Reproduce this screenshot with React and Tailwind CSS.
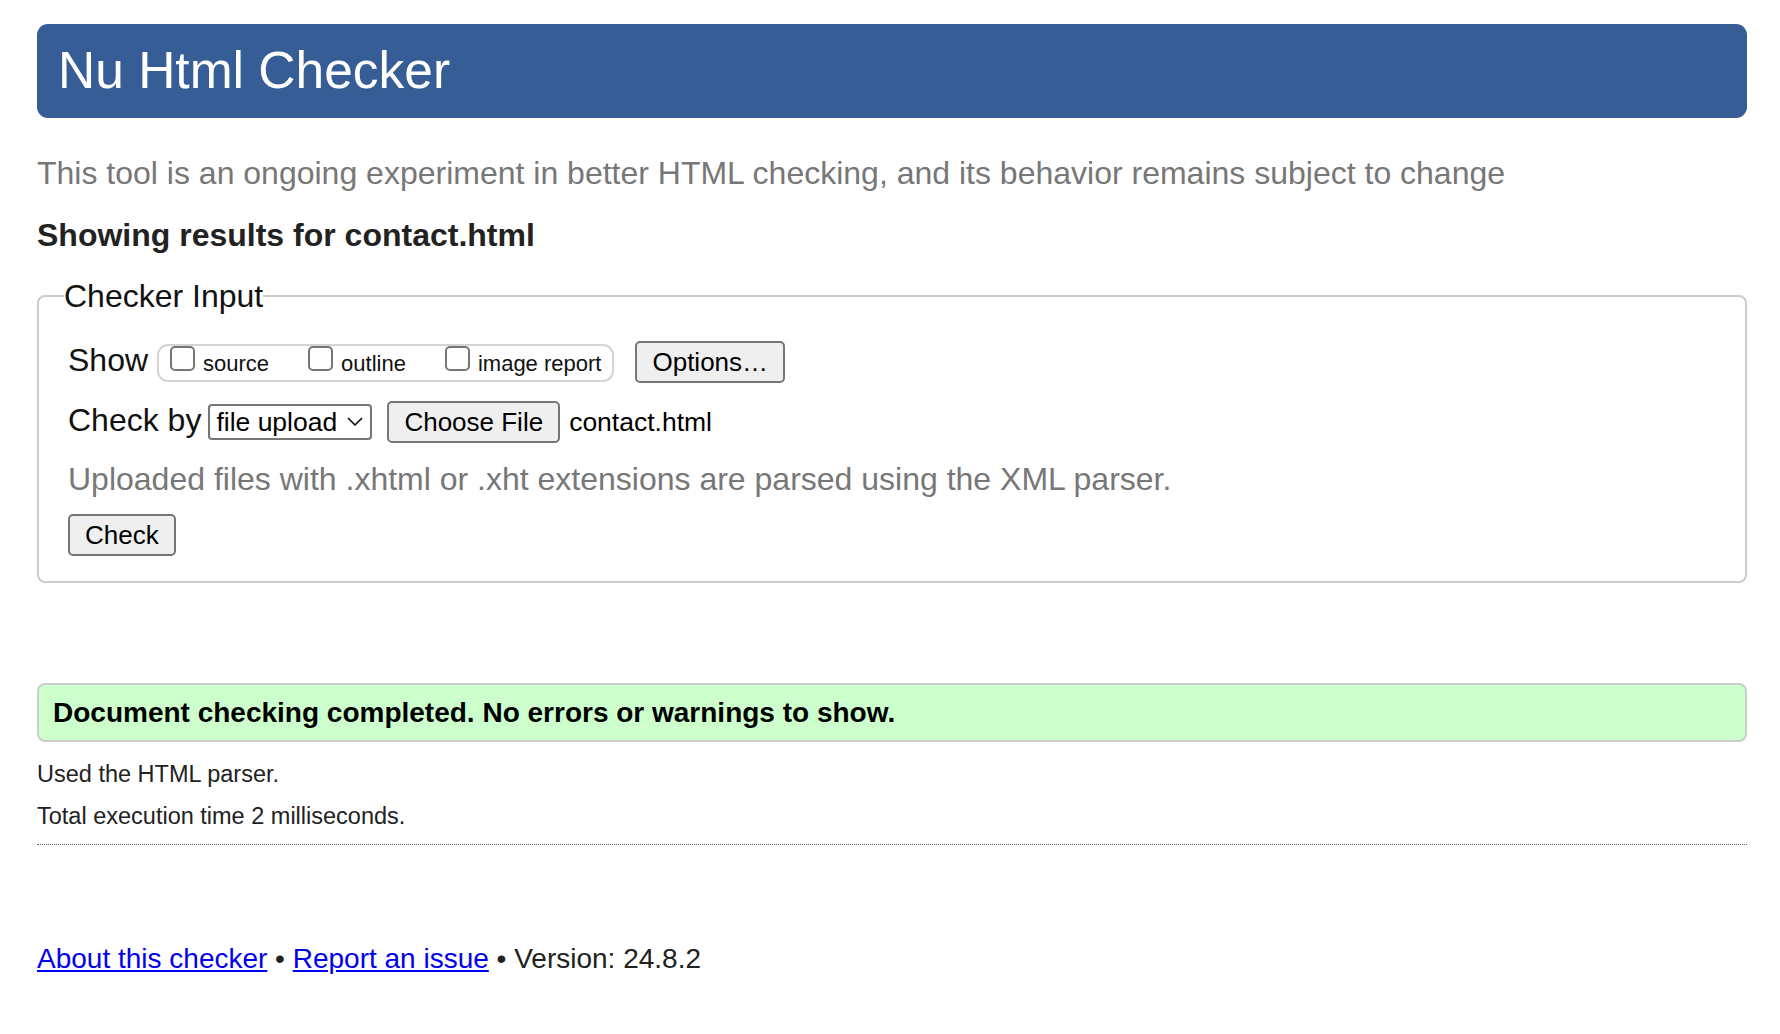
import React from "react";

const Chevron = () => (
  <svg width="16" height="10" viewBox="0 0 16 10" fill="none" stroke="#111" strokeWidth="1.7" strokeLinecap="round" strokeLinejoin="round">
    <path d="M1.5 1.5 L8 8 L14.5 1.5" />
  </svg>
);

const Option = ({ label }) => (
  <label className="flex items-baseline gap-[8px]">
    <input
      type="checkbox"
      className="appearance-none w-[25px] h-[25px] border-2 border-[#767676] rounded-[5px] bg-white"
    />
    <span className="text-[22px] leading-[26px] text-[#111]">{label}</span>
  </label>
);

const Btn = ({ children, className = "" }) => (
  <button
    type="button"
    className={`border-2 border-[#767676] rounded-[5px] bg-[#efefef] px-[15px] text-[26px] leading-none text-black ${className}`}
  >
    {children}
  </button>
);

export default function App() {
  return (
    <div className="min-h-screen bg-white pl-[37px] pr-[33px] pt-[24px] pb-[60px] font-['Liberation_Sans',Arial,sans-serif] text-[#222]">
      {/* header */}
      <header className="h-[94px] rounded-[11px] bg-[#365d96] flex items-center pl-[21px]">
        <h1 className="text-[51.5px] leading-none text-white">Nu Html Checker</h1>
      </header>

      <p className="mt-[35px] text-[32px] leading-[40px] text-[#777]">
        This tool is an ongoing experiment in better HTML checking, and its behavior remains subject to change
      </p>

      <h2 className="mt-[22px] text-[32px] leading-[40px] font-bold text-[#222]">
        Showing results for contact.html
      </h2>

      {/* checker input */}
      <fieldset className="mt-[24px] border-2 border-[#ccc] rounded-[8px] pl-[29px] pt-[28px] pb-[25px]">
        <legend className="-ml-[4px] text-[32px] leading-[34px] text-[#111]">Checker Input</legend>

        <div className="flex items-baseline">
          <span className="text-[32px] leading-[36px] text-[#111] mr-[9px]">Show</span>
          <div className="flex items-baseline gap-[39px] h-[38px] border-2 border-[#d4d4d4] rounded-[11px] pl-[11px] pr-[11px]">
            <Option label="source" />
            <Option label="outline" />
            <Option label="image report" />
          </div>
          <Btn className="ml-[21px] h-[42px]">Options…</Btn>
        </div>

        <div className="flex items-baseline mt-[18px]">
          <span className="text-[32px] leading-[36px] text-[#111] mr-[7px]">Check by</span>
          <div className="flex items-center justify-between h-[36px] w-[164px] border-2 border-[#767676] rounded-[4px] pl-[6px] pr-[7px]">
            <span className="text-[26.5px] leading-none text-black">file upload</span>
            <Chevron />
          </div>
          <Btn className="ml-[15px] h-[42px]">Choose File</Btn>
          <span className="ml-[9px] text-[26.5px] leading-[30px] text-black">contact.html</span>
        </div>

        <p className="mt-[18px] text-[32px] leading-[36px] text-[#777]">
          Uploaded files with .xhtml or .xht extensions are parsed using the XML parser.
        </p>

        <div className="mt-[17px]">
          <Btn className="h-[42px]">Check</Btn>
        </div>
      </fieldset>

      {/* result */}
      <div className="mt-[100px] h-[59px] flex items-center border-2 border-[#ccc] rounded-[8px] bg-[#ccffcc] pl-[14px]">
        <p className="text-[28px] leading-[32px] font-bold text-black">
          Document checking completed. No errors or warnings to show.
        </p>
      </div>

      <p className="mt-[11px] text-[23.5px] leading-[42px] text-[#222]">Used the HTML parser.</p>
      <p className="text-[23.5px] leading-[42px] text-[#222]">Total execution time 2 milliseconds.</p>

      <div className="mt-[7px] border-t border-dotted border-[#666]" />

      <p className="mt-[98px] text-[28px] leading-[32px] text-[#222]">
        <a href="#" className="text-[#0000ee] underline">About this checker</a>
        {" • "}
        <a href="#" className="text-[#0000ee] underline">Report an issue</a>
        {" • Version: 24.8.2"}
      </p>
    </div>
  );
}
